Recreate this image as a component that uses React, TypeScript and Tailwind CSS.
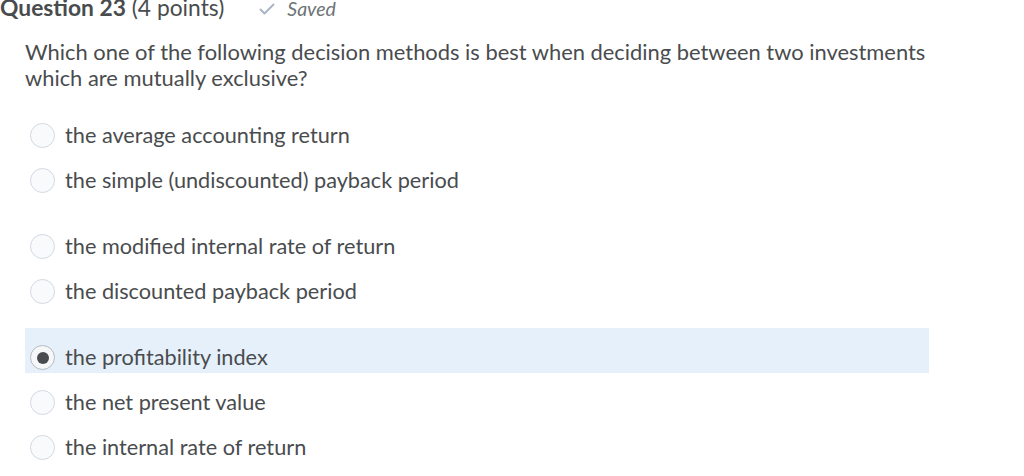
export default function App() {
  const groups = [
    ["the average accounting return", "the simple (undiscounted) payback period"],
    ["the modified internal rate of return", "the discounted payback period"],
    ["the profitability index", "the net present value", "the internal rate of return"],
  ];
  const selected = "the profitability index";

  return (
    <div className="h-[476px] w-[1024px] overflow-hidden bg-white text-[#494c4e]" style={{ fontFamily: "Lato, 'Open Sans', sans-serif" }}>
      <div className="-mt-[7px] flex h-[28px] items-baseline">
        <span className="text-[22.8px] leading-[28px]">
          <span className="font-bold">Question 23</span> (4 points)
        </span>
        <span className="ml-[35px] flex items-baseline gap-[12px] text-[19.5px] italic text-[#6e7376]">
          <svg width="16" height="12" viewBox="0 0 16 12" className="self-center">
            <path d="M1.5 6.5 L5.5 10.5 L14.5 1.5" fill="none" stroke="#a9b6c4" strokeWidth="2" strokeLinecap="round" strokeLinejoin="round" />
          </svg>
          Saved
        </span>
      </div>

      <div className="ml-[25px] mt-[18px] w-[912px] text-[21.9px] leading-[26px]">
        Which one of the following decision methods is best when deciding between two investments which are mutually exclusive?
      </div>

      <div className="ml-[25px] mt-[15px] w-[904px]">
        {groups.map((g, gi) => (
          <div key={gi} className={gi > 0 ? "mt-[21px]" : ""}>
            {g.map((opt) => {
              const on = opt === selected;
              return (
                <div key={opt} className={"flex h-[45px] items-end pb-[3px] pl-[5px] " + (on ? "bg-[#e6f0fa]" : "")}>
                  <div className="flex items-center">
                    <span
                      className={
                        "flex h-[25px] w-[25px] items-center justify-center rounded-full border-[1.5px] " +
                        (on ? "border-[#b5bcc2] bg-[#f6f7f8]" : "border-[#d3d9e3] bg-[#f9fafb]")
                      }
                    >
                      {on ? <span className="h-[12px] w-[12px] rounded-full bg-[#494c4e]" /> : null}
                    </span>
                    <span className="ml-[10px] text-[21.7px] leading-[25px]">{opt}</span>
                  </div>
                </div>
              );
            })}
          </div>
        ))}
      </div>
    </div>
  );
}
